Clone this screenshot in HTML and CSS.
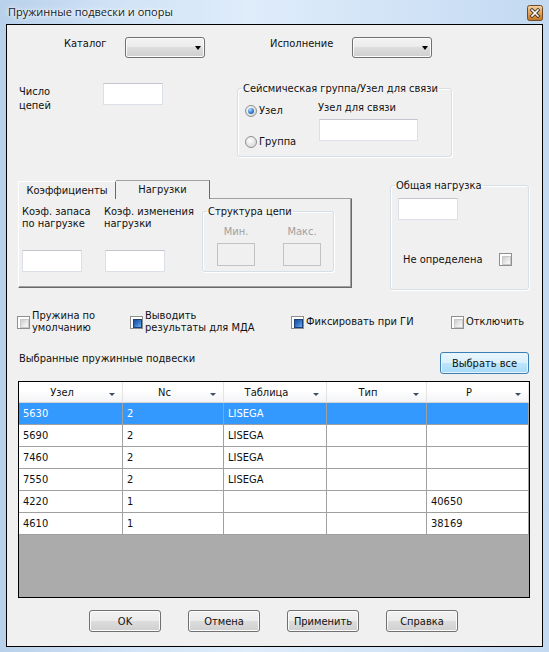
FILE: index.html
```html
<!DOCTYPE html>
<html lang="ru">
<head>
<meta charset="utf-8">
<title>Пружинные подвески и опоры</title>
<link rel="stylesheet" href="styles.css">
</head>
<body>
<div class="window">
  <div class="titlebar">
    <span class="title">Пружинные подвески и опоры</span>
    <span class="close">
      <svg width="16" height="16" viewBox="0 0 16 16">
        <defs>
          <linearGradient id="cg" x1="0" y1="0" x2="0" y2="1">
            <stop offset="0" stop-color="#f3d3a4"/>
            <stop offset="0.5" stop-color="#e0a460"/>
            <stop offset="1" stop-color="#c0721f"/>
          </linearGradient>
        </defs>
        <rect x="0.5" y="0.5" width="15" height="15" rx="2" fill="url(#cg)" stroke="#6e4a28"/>
        <path d="M5 5 L11 11 M11 5 L5 11" stroke="#3a2a1a" stroke-width="3.2" stroke-linecap="square"/>
        <path d="M5 5 L11 11 M11 5 L5 11" stroke="#ffffff" stroke-width="1.6" stroke-linecap="square"/>
      </svg>
    </span>
  </div>
  <div class="client">
    <div class="row r1">
      <span class="lbl lbl-cat">Каталог</span>
      <div class="combo"><span class="arrow"></span></div>
      <span class="lbl lbl-isp">Исполнение</span>
      <div class="combo"><span class="arrow"></span></div>
    </div>

    <div class="row r2">
      <div class="lbl chains">Число<br>цепей</div>
      <div class="edit e-chains"></div>
      <fieldset class="group seismic">
        <legend>Сейсмическая группа/Узел для связи</legend>
        <div class="sbody">
          <div class="radios">
            <div class="radio"><span class="rb on"></span><span>Узел</span></div>
            <div class="radio r-group"><span class="rb"></span><span>Группа</span></div>
          </div>
          <div class="link">
            <div class="lbl">Узел для связи</div>
            <div class="edit e-link"></div>
          </div>
        </div>
      </fieldset>
    </div>

    <div class="row r3">
      <div class="tabctl">
        <div class="tabs">
          <div class="tab tab1">Коэффициенты</div>
          <div class="tab tab2">Нагрузки</div>
        </div>
        <div class="pane">
          <div class="pcol pcol1">
            <div class="lbl two">Коэф. запаса<br>по нагрузке</div>
            <div class="edit e-coef"></div>
          </div>
          <div class="pcol pcol2">
            <div class="lbl two">Коэф. изменения<br>нагрузки</div>
            <div class="edit e-coef e-coef2"></div>
          </div>
          <fieldset class="group chain">
            <legend>Структура цепи</legend>
            <div class="minmax">
              <div class="mm"><div class="dis">Мин.</div><div class="dbox"></div></div>
              <div class="mm"><div class="dis">Макс.</div><div class="dbox"></div></div>
            </div>
          </fieldset>
        </div>
      </div>
      <fieldset class="group total">
        <legend>Общая нагрузка</legend>
        <div class="edit e-total"></div>
        <div class="undef"><span>Не определена</span><span class="cb"></span></div>
      </fieldset>
    </div>

    <div class="row r4">
      <div class="chk"><span class="cb"></span><span class="ct">Пружина по<br>умолчанию</span></div>
      <div class="chk"><span class="cb on"></span><span class="ct">Выводить<br>результаты для МДА</span></div>
      <div class="chk"><span class="cb on"></span><span class="ct">Фиксировать при ГИ</span></div>
      <div class="chk"><span class="cb"></span><span class="ct">Отключить</span></div>
    </div>

    <div class="row r5">
      <span class="lbl sel-lbl">Выбранные пружинные подвески</span>
      <div class="btn btn-hot">Выбрать все</div>
    </div>

    <div class="grid">
      <div class="gtable">
        <div class="hc"><span>Узел</span><i class="harr"></i></div>
        <div class="hc"><span>Nc</span><i class="harr"></i></div>
        <div class="hc"><span>Таблица</span><i class="harr"></i></div>
        <div class="hc"><span>Тип</span><i class="harr"></i></div>
        <div class="hc"><span>P</span><i class="harr"></i></div>

        <div class="c s">5630</div><div class="c s">2</div><div class="c s">LISEGA</div><div class="c s"></div><div class="c s"></div>
        <div class="c">5690</div><div class="c">2</div><div class="c">LISEGA</div><div class="c"></div><div class="c"></div>
        <div class="c">7460</div><div class="c">2</div><div class="c">LISEGA</div><div class="c"></div><div class="c"></div>
        <div class="c">7550</div><div class="c">2</div><div class="c">LISEGA</div><div class="c"></div><div class="c"></div>
        <div class="c">4220</div><div class="c">1</div><div class="c"></div><div class="c"></div><div class="c">40650</div>
        <div class="c">4610</div><div class="c">1</div><div class="c"></div><div class="c"></div><div class="c">38169</div>
      </div>
    </div>

    <div class="row buttons">
      <div class="btn">OK</div>
      <div class="btn">Отмена</div>
      <div class="btn">Применить</div>
      <div class="btn">Справка</div>
    </div>
  </div>
</div>
</body>
</html>
```

FILE: styles.css
```css
* { box-sizing: border-box; }
html, body { margin: 0; padding: 0; }
body {
  width: 549px;
  height: 652px;
  overflow: hidden;
  font-family: "DejaVu Sans Condensed", "DejaVu Sans", sans-serif;
  font-stretch: condensed;
  font-size: 11px;
  color: #111;
  background: #c4daf1;
}

.window {
  width: 549px;
  height: 652px;
  padding: 0 6px 5px 6px;
  display: flex;
  flex-direction: column;
  background: linear-gradient(to right, #b8d0ea 0%, #cfe2f6 20%, #dfecfa 45%, #d3e4f7 70%, #c2d9f1 100%);
}

.titlebar {
  height: 24px;
  display: flex;
  justify-content: space-between;
  align-items: flex-start;
  padding-left: 2px;
}
.title {
  font-family: "Open Sans", "Noto Sans", sans-serif;
  font-stretch: normal;
  font-size: 11px;
  line-height: 16px;
  margin-top: 4px;
  color: #1a1a1a;
  text-shadow: 0 0 6px #ffffff, 0 0 3px #ffffff;
}
.close { margin-top: 5px; width: 16px; height: 16px; display: block; }
.close svg { display: block; }

.client {
  height: 623px;
  border: 1px solid #000;
  background: #f0f0f0;
  display: flex;
  flex-direction: column;
}

.row { display: flex; align-items: flex-start; flex: none; }
.lbl { line-height: 13px; white-space: nowrap; }

/* row 1 */
.r1 { margin-top: 12px; height: 21px; }
.lbl-cat { margin-left: 57px; width: 61px; }
.lbl-isp { margin-left: 65px; width: 82px; }
.combo {
  width: 80px;
  height: 21px;
  border: 1px solid #707070;
  border-radius: 3px;
  background: linear-gradient(#f2f2f2 0%, #ebebeb 50%, #dddddd 50%, #cfcfcf 100%);
  display: flex;
  align-items: center;
  justify-content: flex-end;
  padding-right: 3px;
  box-shadow: inset 0 0 0 1px #fcfcfc;
}
.arrow {
  width: 0; height: 0;
  border-left: 3.5px solid transparent;
  border-right: 3.5px solid transparent;
  border-top: 4px solid #000;
  margin-top: 1px;
}

/* edits */
.edit {
  background: #fff;
  border: 1px solid #dbdfe6;
  border-top-color: #c2c6cc;
  height: 22px;
  width: 60px;
}

/* row 2 */
.r2 { margin-top: 24px; height: 75px; }
.chains { margin-left: 12px; width: 84px; line-height: 14px; padding-top: 3px; }
.e-chains { margin-top: 1px; }

.group {
  margin: 0;
  padding: 0 0 0 7px;
  border: 1px solid #d5dfe5;
  border-radius: 3px;
  min-width: 0;
  box-shadow: inset 1px 1px 0 #fff, 1px 1px 0 #fff;
}
.group legend {
  padding: 0 1px;
  margin-left: -3px;
  line-height: 13px;
  white-space: nowrap;
}
.seismic { margin-left: 74px; width: 215px; height: 75px; }
.sbody { display: flex; }
.radios { width: 73px; padding-top: 9px; }
.radio { display: flex; align-items: center; line-height: 14px; height: 14px; }
.r-group { margin-top: 17px; }
.rb {
  width: 12px; height: 12px;
  border-radius: 50%;
  border: 1px solid #8e8f8f;
  background: radial-gradient(circle at 40% 35%, #ffffff 0%, #e8e8e8 45%, #cfcfcf 100%);
  margin-right: 2px;
  display: flex; align-items: center; justify-content: center;
}
.rb.on::after {
  content: "";
  width: 6px; height: 6px;
  border-radius: 50%;
  background: radial-gradient(circle at 35% 30%, #b4dcff 0%, #3d86d6 50%, #123f85 100%);
}
.link { padding-top: 6px; }
.e-link { margin-top: 5px; margin-left: 1px; width: 99px; }

/* row 3 */
.r3 { margin-top: 22px; height: 111px; }
.tabctl { margin-left: 11px; margin-top: 1px; width: 334px; }
.tabs { display: flex; align-items: flex-end; height: 19px; }
.tab {
  text-align: center;
  line-height: 17px;
}
.tab1 {
  width: 98px; height: 18px;
  border-top: 1px solid #ffffff;
  border-left: 1px solid #ffffff;
  border-right: 1px solid #696969;
}
.tab2 {
  width: 94px; height: 19px;
  line-height: 18px;
  border-top: 1px solid #a0a0a0;
  border-right: 1px solid #696969;
}
.pane {
  height: 89px;
  border-left: 1px solid #ffffff;
  border-right: 1px solid #696969;
  border-bottom: 1px solid #696969;
  box-shadow: inset -1px -1px 0 #a0a0a0;
  display: flex;
  align-items: flex-start;
  padding: 7px 0 0 3px;
  position: relative;
}
.pane::before {
  content: "";
  position: absolute;
  left: 191px; right: -1px; top: -1px;
  border-top: 1px solid #a0a0a0;
}
.pcol { display: flex; flex-direction: column; }
.pcol1 { width: 82px; }
.pcol2 { width: 98px; }
.two { line-height: 12px; }
.e-coef { margin-top: 20px; }
.e-coef2 { margin-left: 1px; }

.chain { width: 132px; height: 67px; margin-top: -1px; padding-left: 7px; }
.minmax { display: flex; gap: 28px; padding-left: 7px; padding-top: 8px; }
.mm { width: 38px; display: flex; flex-direction: column; align-items: center; }
.dis { color: #a0a0a0; line-height: 12px; }
.dbox {
  margin-top: 5px;
  width: 38px; height: 23px;
  border: 1px solid #c2c2c2;
  background: #f0f0f0;
}

.total { margin-left: 38px; width: 139px; height: 111px; }
.e-total { margin-top: 6px; }
.undef {
  display: flex;
  align-items: center;
  margin-top: 33px;
  height: 13px;
  padding-left: 5px;
  padding-right: 16px;
  justify-content: space-between;
}

/* checkbox */
.cb {
  flex: none;
  width: 13px; height: 13px;
  border: 1px solid #8e8f8f;
  background: #fff;
  padding: 2px;
  display: block;
}
.cb::after {
  content: "";
  display: block;
  width: 7px; height: 7px;
  background: linear-gradient(135deg, #cbcbcb 0%, #e6e6e6 50%, #fafafa 100%);
  border: 1px solid #c8c8c8;
}
.cb.on::after {
  background: linear-gradient(135deg, #1f4f98 0%, #2e6fc2 45%, #6cb2ef 100%);
  border: 1px solid #1d3f78;
}

/* row 4 */
.r4 {
  margin-top: 20px;
  height: 24px;
  display: grid;
  grid-template-columns: 113px 161px 160px auto;
  padding-left: 10px;
  align-items: center;
}
.chk { display: flex; align-items: center; }
.ct { margin-left: 2px; line-height: 12px; white-space: nowrap; }

/* row 5 */
.r5 { margin-top: 18px; height: 22px; }
.sel-lbl { margin-left: 12px; line-height: 14px; }

.btn {
  width: 72px;
  height: 22px;
  border: 1px solid #707070;
  border-radius: 3px;
  background: linear-gradient(#f2f2f2 0%, #ebebeb 50%, #dddddd 50%, #cfcfcf 100%);
  box-shadow: inset 0 0 0 1px #fbfbfb;
  display: flex;
  align-items: center;
  justify-content: center;
  line-height: 13px;
}
.btn-hot {
  margin-left: auto;
  margin-right: 13px;
  width: 89px;
  border-color: #3c7fb1;
  background: linear-gradient(#eaf6fd 0%, #d9f0fc 50%, #bee6fd 50%, #a7d9f5 100%);
  box-shadow: inset 0 0 0 1px #e6f5fd;
}

/* grid */
.grid {
  flex: none;
  margin-top: 7px;
  margin-left: 11px;
  width: 512px;
  height: 217px;
  border: 1px solid #000;
  background: #ababab;
}
.gtable {
  display: grid;
  grid-template-columns: 104px 101px 103px 100px 102px;
  grid-auto-rows: 22px;
  grid-template-rows: 21px;
}
.hc {
  background: linear-gradient(#ffffff 0%, #ffffff 40%, #f3f4f6 100%);
  border-right: 1px solid #e1e3e6;
  border-bottom: 1px solid #d5d5d5;
  display: flex;
  align-items: center;
  justify-content: center;
  padding-right: 17px;
  position: relative;
  line-height: 13px;
}
.harr {
  position: absolute;
  right: 7px;
  top: 11px;
  width: 0; height: 0;
  border-left: 3px solid transparent;
  border-right: 3px solid transparent;
  border-top: 3px solid #3d4d63;
}
.c {
  background: #fff;
  border-right: 1px solid #a0a0a0;
  border-bottom: 1px solid #a0a0a0;
  padding-left: 4px;
  line-height: 21px;
  white-space: nowrap;
}
.c.s { background: #3399ff; color: #fff; }

/* bottom buttons */
.buttons { margin-top: 12px; padding-left: 82px; gap: 27px; }
```
